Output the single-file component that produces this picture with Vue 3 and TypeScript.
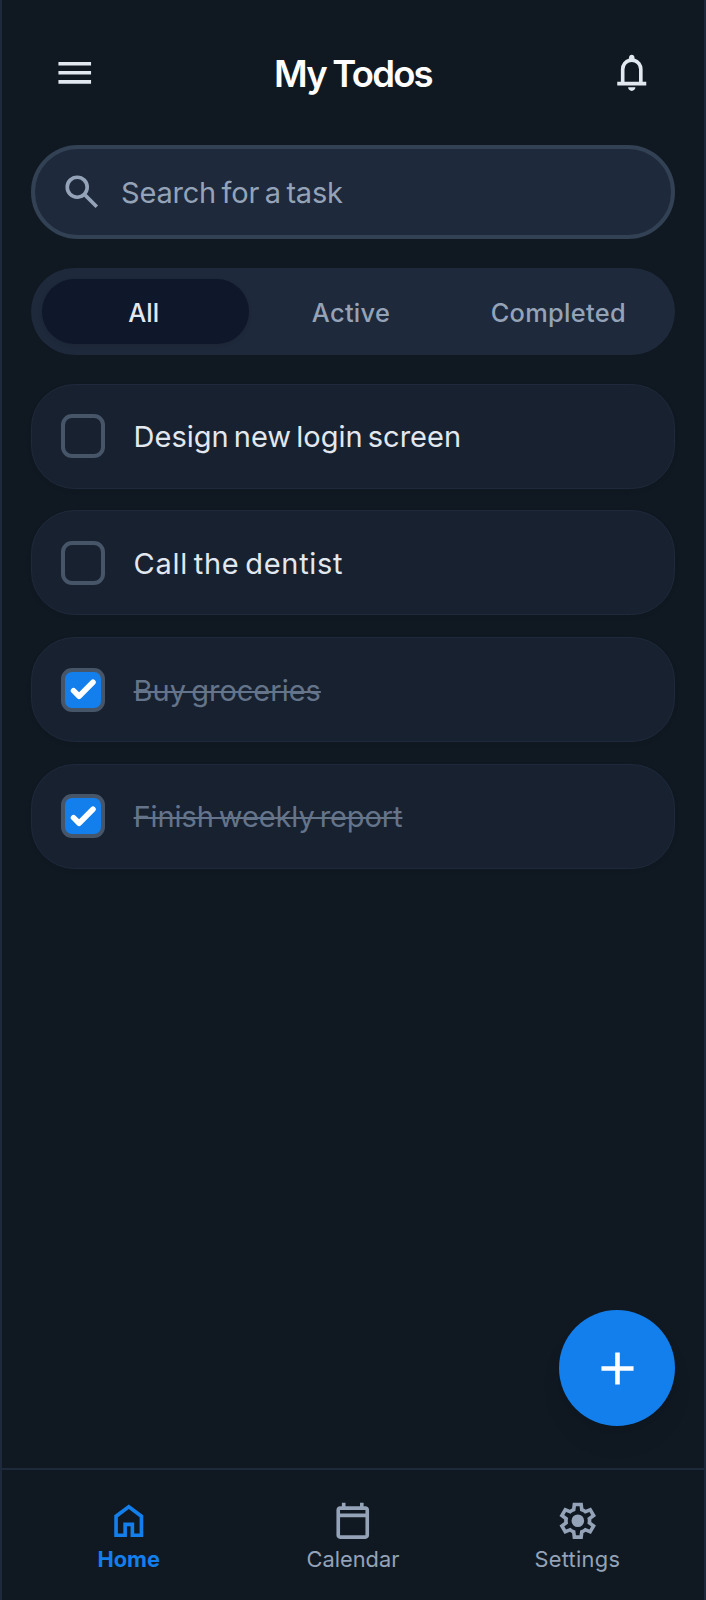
<script setup lang="ts">
import { ref, computed } from 'vue'

interface Task { id: number; title: string; done: boolean; fit: string }
interface Tab { name: string; fit: string }

const tabs: Tab[] = [
  { name: 'All', fit: 'fit-all' },
  { name: 'Active', fit: 'fit-active' },
  { name: 'Completed', fit: 'fit-completed' },
]
const current = ref('All')
const query = ref('')
const tasks = ref<Task[]>([
  { id: 1, title: 'Design new login screen', done: false, fit: 'fit-design' },
  { id: 2, title: 'Call the dentist', done: false, fit: 'fit-call' },
  { id: 3, title: 'Buy groceries', done: true, fit: 'fit-buy' },
  { id: 4, title: 'Finish weekly report', done: true, fit: 'fit-finish' },
])
const visible = computed(() =>
  tasks.value.filter(
    (t) =>
      (current.value === 'All' || t.done === (current.value === 'Completed')) &&
      t.title.toLowerCase().includes(query.value.toLowerCase()),
  ),
)
const nav = [
  {
    name: 'Home',
    fit: 'fit-home',
    icon: 'M240-200h120v-240h240v240h120v-360L480-740 240-560v360Zm-80 80v-480l320-240 320 240v480H520v-240h-80v240H160Z',
  },
  {
    name: 'Calendar',
    fit: 'fit-calendar',
    icon: 'M200-80q-33 0-56.5-23.5T120-160v-560q0-33 23.5-56.5T200-800h40v-80h80v80h320v-80h80v80h40q33 0 56.5 23.5T840-720v560q0 33-23.5 56.5T760-80H200Zm0-80h560v-400H200v400Zm0-480h560v-80H200v80Z',
  },
  {
    name: 'Settings',
    fit: 'fit-settings',
    icon: 'm370-80-16-128q-13-5-24.5-12T307-235l-119 50L78-375l103-78q-1-7-1-13.5v-27q0-6.5 1-13.5L78-585l110-190 119 50q11-8 23-15t24-12l16-128h220l16 128q13 5 24.5 12t22.5 15l119-50 110 190-103 78q1 7 1 13.5v27q0 6.5-2 13.5l103 78-110 190-118-50q-11 8-23 15t-24 12L590-80H370Zm70-80h79l14-106q31-8 57.5-23.5T639-327l99 41 39-68-86-65q5-14 7-29.5t2-31.5q0-16-2-31.5t-7-29.5l86-65-39-68-99 42q-22-23-48.5-38.5T533-694l-13-106h-79l-14 106q-31 8-57.5 23.5T321-633l-99-41-39 68 86 64q-5 15-7 30t-2 32q0 16 2 31t7 30l-86 65 39 68 99-42q22 23 48.5 38.5T427-266l13 106Zm42-180q58 0 99-41t41-99q0-58-41-99t-99-41q-59 0-99.5 41T342-480q0 58 40.5 99t99.5 41Z',
  },
]
</script>

<template>
  <div class="screen">
    <header class="top">
      <button class="icon-btn" aria-label="Menu">
        <svg class="icon" viewBox="0 -960 960 960"><path d="M120-240v-80h720v80H120Zm0-200v-80h720v80H120Zm0-200v-80h720v80H120Z" /></svg>
      </button>
      <h1 class="title">My Todos</h1>
      <button class="icon-btn" aria-label="Notifications">
        <svg class="icon" viewBox="0 -960 960 960"><path d="M160-200v-80h80v-280q0-83 50-147.5T420-792v-28q0-25 17.5-42.5T480-880q25 0 42.5 17.5T540-820v28q80 20 130 84.5T720-560v280h80v80H160Zm320 120q-33 0-56.5-23.5T400-160h160q0 33-23.5 56.5T480-80ZM320-280h320v-280q0-66-47-113t-113-47q-66 0-113 47t-47 113v280Z" /></svg>
      </button>
    </header>

    <label class="search">
      <svg class="icon" viewBox="0 -960 960 960"><path d="M784-120 532-372q-30 24-69 38t-83 14q-109 0-184.5-75.5T120-580q0-109 75.5-184.5T380-840q109 0 184.5 75.5T640-580q0 44-14 83t-38 69l252 252-56 56ZM380-400q75 0 127.5-52.5T560-580q0-75-52.5-127.5T380-760q-75 0-127.5 52.5T200-580q0 75 52.5 127.5T380-400Z" /></svg>
      <input v-model="query" class="search-input" placeholder="Search for a task" />
    </label>

    <div class="tabs">
      <button
        v-for="tab in tabs"
        :key="tab.name"
        class="tab"
        :class="{ active: current === tab.name }"
        @click="current = tab.name"
      >
        <span :class="tab.fit">{{ tab.name }}</span>
      </button>
    </div>

    <main class="list">
      <article v-for="task in visible" :key="task.id" class="card" :class="{ done: task.done }">
        <button class="box" :aria-label="task.title" @click="task.done = !task.done">
          <svg v-if="task.done" class="check" viewBox="0 0 16 16"><path d="M12.207 4.793a1 1 0 010 1.414l-5 5a1 1 0 01-1.414 0l-2-2a1 1 0 011.414-1.414L6.5 9.086l4.293-4.293a1 1 0 011.414 0z" /></svg>
        </button>
        <span class="label" :class="task.fit">{{ task.title }}</span>
      </article>
    </main>

    <button class="fab" aria-label="Add task">
      <svg class="plus" viewBox="0 -960 960 960"><path d="M440-440H200v-80h240v-240h80v240h240v80H520v240h-80v-240Z" /></svg>
    </button>

    <nav class="nav">
      <a v-for="(item, i) in nav" :key="item.name" class="nav-item" :class="{ current: i === 0 }">
        <svg class="icon" viewBox="0 -960 960 960"><path :d="item.icon" /></svg>
        <span :class="item.fit">{{ item.name }}</span>
      </a>
    </nav>
  </div>
</template>

<style>
body {
  background: #101922;
}
</style>

<style scoped>
.screen {
  box-sizing: border-box;
  display: flex;
  flex-direction: column;
  height: 1600px;
  border: solid #1e293b;
  border-width: 0 2px;
  background: #101922;
  font-family: Inter, 'Noto Sans', sans-serif;
  color: #e2e8f0;
  overflow: hidden;
}
button {
  padding: 0;
  border: 0;
  background: none;
  color: inherit;
  font: inherit;
}
svg {
  display: block;
  flex: none;
  fill: currentColor;
}
.icon {
  width: 43.5px;
  height: 43.5px;
}
.top {
  display: flex;
  align-items: center;
  justify-content: space-between;
  height: 145px;
  padding: 0 29px;
}
.icon-btn {
  display: grid;
  place-items: center;
  width: 87px;
  height: 87px;
}
.title {
  margin: 3px 0 0;
  color: #fff;
  font-size: 36.5px;
  line-height: 45px;
  font-weight: 600;
  letter-spacing: -1.8px;
  word-spacing: -1px;
  white-space: nowrap;
}
.search {
  box-sizing: border-box;
  display: flex;
  align-items: center;
  flex: none;
  gap: 18px;
  height: 94px;
  margin: 0 29px;
  padding: 0 24.5px;
  border: 4px solid #334155;
  border-radius: 47px;
  background: #1e293b;
  color: #94a3b8;
}
.search-input {
  flex: 1;
  min-width: 0;
  padding: 2px 0 0;
  border: 0;
  outline: 0;
  background: none;
  color: #e2e8f0;
  font: 400 29px/44px Inter, sans-serif;
  letter-spacing: -0.2px;
  word-spacing: -2.4px;
}
.search-input::placeholder {
  color: #94a3b8;
  opacity: 1;
}
.tabs {
  box-sizing: border-box;
  display: flex;
  flex: none;
  height: 87px;
  margin: 29px 29px 0;
  padding: 11px;
  border-radius: 43.5px;
  background: #1e293b;
}
.tab {
  flex: 1;
  padding: 2px 4px 0 0;
  border-radius: 32.5px;
  color: #94a3b8;
  font-size: 25.4px;
  line-height: 36px;
  font-weight: 500;
}
.tab.active {
  background: #0f172a;
  box-shadow: 0 2px 4px rgba(0, 0, 0, 0.08);
  color: #e2e8f0;
}
.list {
  display: flex;
  flex: 1;
  flex-direction: column;
  gap: 21.7px;
  padding: 28.8px 29px 0;
}
.card {
  box-sizing: border-box;
  display: flex;
  align-items: center;
  flex: none;
  height: 105px;
  padding: 0 29.3px;
  border: 1.8px solid #1e293b;
  border-radius: 43.5px;
  background: #18212f;
  box-shadow: 0 2px 4px rgba(0, 0, 0, 0.08);
}
.box {
  box-sizing: border-box;
  display: grid;
  place-items: center;
  flex: none;
  width: 44px;
  height: 44px;
  border: 4px solid #475569;
  border-radius: 11px;
}
.done .box {
  background: #137fec;
  color: #fff;
}
.check {
  width: 44.5px;
  height: 44.5px;
  margin: -6px;
}
.label {
  margin-left: 28.3px;
  padding-top: 2px;
  font-size: 29px;
  line-height: 44px;
  word-spacing: -3px;
  white-space: nowrap;
}
.done .label {
  color: #64748b;
  text-decoration: line-through;
  text-decoration-thickness: 2px;
}
.fit-active {
  letter-spacing: 0.3px;
}
.fit-completed {
  letter-spacing: 0.3px;
}
.fit-call {
  letter-spacing: 0.7px;
}
.fit-finish {
  letter-spacing: -0.1px;
}
.fit-settings {
  letter-spacing: 0.3px;
}
.fab {
  display: grid;
  place-items: center;
  flex: none;
  align-self: flex-end;
  width: 116px;
  height: 116px;
  margin: 0 28.7px 41.7px 0;
  border-radius: 50%;
  background: #137fec;
  color: #fff;
  box-shadow: 0 18px 27px -5px rgba(0, 0, 0, 0.08), 0 7px 11px -7px rgba(0, 0, 0, 0.08);
}
.plus {
  width: 55px;
  height: 55px;
}
.nav {
  box-sizing: border-box;
  display: flex;
  flex: none;
  height: 132px;
  padding: 28.5px 14.5px 0;
  border-top: 2px solid #1e293b;
}
.nav-item {
  display: flex;
  flex: 1;
  flex-direction: column;
  align-items: center;
  gap: 3px;
  color: #94a3b8;
  font-size: 21.8px;
  line-height: 29px;
}
.nav-item.current {
  color: #137fec;
  font-weight: 650;
}
</style>
